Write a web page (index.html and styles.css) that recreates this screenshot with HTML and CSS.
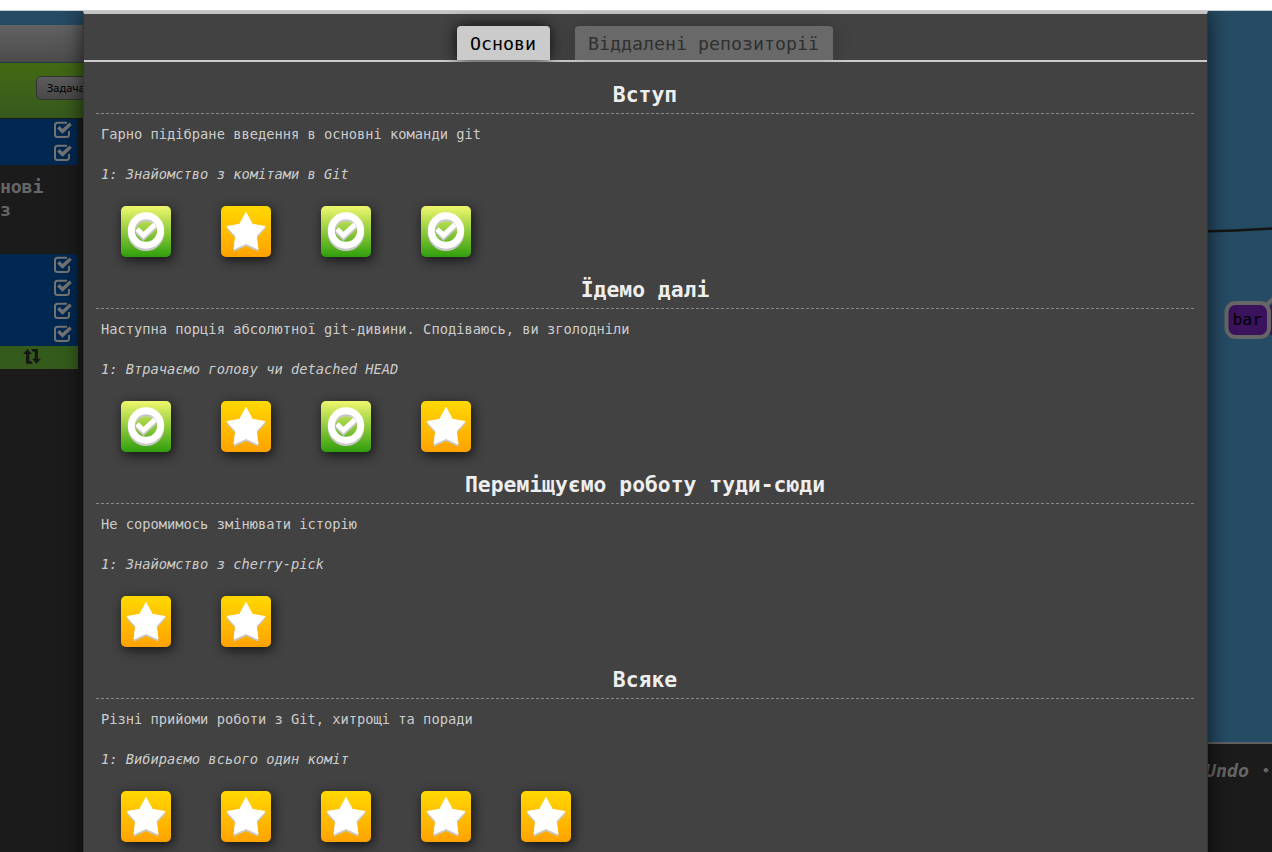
FILE: index.html
```
<!DOCTYPE html>
<html lang="uk">
<head>
<meta charset="utf-8">
<title>Learn Git Branching</title>
<link rel="stylesheet" href="styles.css">
</head>
<body>
<svg class="defs" width="0" height="0">
  <symbol id="check-square" viewBox="0 0 20 18">
    <path d="M14 1.800H4.500Q2 1.800 2 4.300V13.500Q2 16 4.500 16H13.500Q16 16 16 13.500V10" fill="none" stroke="currentColor" stroke-width="2"/>
    <path d="M5.300 6.300L9.500 10.300L17.700 2.700" fill="none" stroke="currentColor" stroke-width="3.400"/>
  </symbol>
  <symbol id="swap" viewBox="0 0 20 18">
    <path d="M5.500 1L10 6H7.300V13H9L11 15.800H4V6H1ZM9 1H16V10.800H19L14.500 15.800L10 10.800H12.700V3.800H11Z" fill="currentColor"/>
  </symbol>
  <symbol id="solved" viewBox="0 0 50 51">
    <g fill="none" stroke="#c8c8c8">
      <circle cx="25" cy="26.800" r="14.700" stroke-width="7"/>
      <path d="M16 25.300L22.500 31.500L34 21" stroke-width="5"/>
    </g>
    <g fill="none" stroke="#fff">
      <circle cx="25" cy="24.500" r="14.700" stroke-width="7"/>
      <path d="M16 23L22.500 29.200L34 18.700" stroke-width="5"/>
    </g>
  </symbol>
  <symbol id="star" viewBox="0 0 50 51">
    <path d="M25 8.500L31.300 20.300L44 22.500L35.300 32L37 45L25 39.500L13 45L14.700 32L6 22.500L18.700 20.300Z" fill="#c8c8c8" stroke="#c8c8c8"/>
    <path d="M25 6.500L31.300 18.300L44 20.500L35.300 30L37 43L25 37.500L13 43L14.700 30L6 20.500L18.700 18.300Z" fill="#fff" stroke="#fff"/>
  </symbol>
</svg>

<div class="page">
  <div class="browser-edge"></div>
  <div class="workspace">
    <div class="terminal">
      <div class="titlebar"></div>
      <div class="toolbar"><span class="tool-button">Задача</span></div>
      <div class="commands">
        <div class="command"><svg><use href="#check-square"/></svg></div>
        <div class="command"><svg><use href="#check-square"/></svg></div>
        <p class="output">нові<br>з</p>
        <div class="command"><svg><use href="#check-square"/></svg></div>
        <div class="command"><svg><use href="#check-square"/></svg></div>
        <div class="command"><svg><use href="#check-square"/></svg></div>
        <div class="command"><svg><use href="#check-square"/></svg></div>
        <div class="command active"><svg><use href="#swap"/></svg></div>
      </div>
    </div>
    <div class="canvas">
      <svg class="tree" viewBox="0 0 72 731">
        <path d="M0 220.500Q35 220 72 217.500" fill="none" stroke="#151515" stroke-width="2.300"/>
        <path d="M64 296L74 287" stroke="#666" stroke-width="4"/>
        <rect x="69" y="293" width="40" height="32" rx="5" fill="#3a125d"/>
        <rect x="26.500" y="292" width="42.500" height="34" rx="9" fill="#3a125d" stroke="#666" stroke-width="4"/>
        <text class="branch" x="47.300" y="313.500" text-anchor="middle">bar</text>
      </svg>
      <div class="footer"><span>Undo</span><span class="dot">•</span></div>
    </div>
  </div>

  <div class="modal">
    <div class="tabs">
      <div class="tab selected">Основи</div>
      <div class="tab">Віддалені репозиторії</div>
    </div>
    <div class="sections">
      <section class="sequence">
        <h2>Вступ</h2>
        <p>Гарно підібране введення в основні команди git</p>
        <p class="level-name">1: Знайомство з комітами в Git</p>
        <div class="levels">
          <div class="level solved"><svg><use href="#solved"/></svg></div>
          <div class="level"><svg><use href="#star"/></svg></div>
          <div class="level solved"><svg><use href="#solved"/></svg></div>
          <div class="level solved"><svg><use href="#solved"/></svg></div>
        </div>
      </section>
      <section class="sequence">
        <h2>Їдемо далі</h2>
        <p>Наступна порція абсолютної git-дивини. Сподіваюсь, ви зголодніли</p>
        <p class="level-name">1: Втрачаємо голову чи detached HEAD</p>
        <div class="levels">
          <div class="level solved"><svg><use href="#solved"/></svg></div>
          <div class="level"><svg><use href="#star"/></svg></div>
          <div class="level solved"><svg><use href="#solved"/></svg></div>
          <div class="level"><svg><use href="#star"/></svg></div>
        </div>
      </section>
      <section class="sequence">
        <h2>Переміщуємо роботу туди-сюди</h2>
        <p>Не соромимось змінювати історію</p>
        <p class="level-name">1: Знайомство з cherry-pick</p>
        <div class="levels">
          <div class="level"><svg><use href="#star"/></svg></div>
          <div class="level"><svg><use href="#star"/></svg></div>
        </div>
      </section>
      <section class="sequence">
        <h2>Всяке</h2>
        <p>Різні прийоми роботи з Git, хитрощі та поради</p>
        <p class="level-name">1: Вибираємо всього один коміт</p>
        <div class="levels">
          <div class="level"><svg><use href="#star"/></svg></div>
          <div class="level"><svg><use href="#star"/></svg></div>
          <div class="level"><svg><use href="#star"/></svg></div>
          <div class="level"><svg><use href="#star"/></svg></div>
          <div class="level"><svg><use href="#star"/></svg></div>
        </div>
      </section>
    </div>
  </div>
</div>
</body>
</html>
```
FILE: styles.css
```
* { box-sizing: border-box; }
body {
  margin: 0;
  font-family: "DejaVu Sans Mono", monospace;
  overflow: hidden;
}
h2, p { margin: 0; font-weight: normal; }
svg { display: block; }
.defs { position: absolute; }

.page {
  position: relative;
  width: 1272px;
  height: 852px;
  overflow: hidden;
  display: flex;
  flex-direction: column;
}
.browser-edge {
  height: 11px;
  background: #fff;
  border-bottom: 1px solid #c9cccb;
}
.workspace {
  flex: 1;
  display: flex;
  justify-content: space-between;
  background: #264b64;
}

.terminal {
  width: 100px;
  padding-top: 14px;
  display: flex;
  flex-direction: column;
}
.titlebar {
  height: 38px;
  background: linear-gradient(#626262, #4b4b4b);
  border-bottom: 1px solid #263a4a;
}
.toolbar {
  height: 55px;
  padding: 13px 0 0 36px;
  background: linear-gradient(#436a13, #37591f);
}
.tool-button {
  display: block;
  width: 80px;
  height: 24px;
  padding-left: 10px;
  border: 1px solid #333;
  border-radius: 5px;
  background: linear-gradient(#5c5c5c, #494949);
  font: 11px/22px "Noto Sans", sans-serif;
  color: #000;
}
.commands {
  flex: 1;
  padding-top: 1px;
  background: #1b1b1b;
}
.command {
  width: 78px;
  height: 23px;
  padding: 2px 0 0 53px;
  background: #002850;
  color: #747474;
}
.command svg { width: 20px; height: 18px; }
.command.active {
  padding-left: 22px;
  background: #345b1b;
  color: #171717;
}
.output {
  height: 89px;
  padding-top: 10px;
  font-size: 18.27px;
  line-height: 23px;
  font-weight: bold;
  letter-spacing: -0.2px;
  color: #666;
}

.canvas {
  width: 72px;
  display: flex;
  flex-direction: column;
}
.tree { width: 72px; height: 731px; }
.branch { font-size: 16.500px; fill: #000; }
.footer {
  flex: 1;
  display: flex;
  gap: 10px;
  padding: 15px 0 0 5px;
  border-top: 2px solid #626262;
  background: #1b1b1b;
  font-size: 18.27px;
  line-height: 23px;
  font-weight: bold;
  font-style: italic;
  color: #666;
}
.dot { font-size: 13px; padding-left: 3px; }

.modal {
  position: absolute;
  left: 83px;
  top: 11px;
  width: 1125px;
  height: 860px;
  border: 1px solid #353535;
  border-top: 3px solid #c3c3c3;
  background: #424242;
  box-shadow: 0 0 20px rgba(0, 0, 0, 0.700);
  clip-path: inset(0 -40px 0 -40px);
}
.tabs {
  height: 48px;
  padding: 12px 2px 0 0;
  display: flex;
  justify-content: center;
  gap: 25px;
  border-bottom: 2px solid #cbcbcb;
  font-size: 18.27px;
  line-height: 36px;
}
.tab {
  width: 258px;
  border-radius: 4px 4px 0 0;
  text-align: center;
  background: #696969;
  color: #303030;
  box-shadow: 0 0 20px rgba(0, 0, 0, 0.200);
}
.tab.selected {
  width: 93px;
  background: #cbcbcb;
  color: #000;
  box-shadow: 0 0 15px rgba(0, 0, 0, 0.850);
}

.sections { padding: 16px 13px 0 12px; position: relative; background: #424242; }
.sequence { height: 195px; }
.sequence h2 {
  height: 36px;
  border-bottom: 1px dashed #888;
  text-align: center;
  font-size: 21.360px;
  line-height: 34px;
  font-weight: bold;
  color: #eee;
}
.sequence p {
  height: 40px;
  padding-left: 5px;
  font-size: 13.720px;
  line-height: 40px;
  color: #ccc;
}
.sequence .level-name { font-style: italic; }
.levels {
  display: flex;
  gap: 50px;
  padding: 12px 25px 0;
}
.level {
  width: 50px;
  height: 51px;
  border-radius: 5px;
  background: linear-gradient(#ffd800, #ffa200);
  box-shadow: 2px 3px 12px rgba(0, 0, 0, 0.700);
}
.level.solved { background: linear-gradient(#f0f76d, #309e0c); }
.level svg { width: 50px; height: 51px; }
```
